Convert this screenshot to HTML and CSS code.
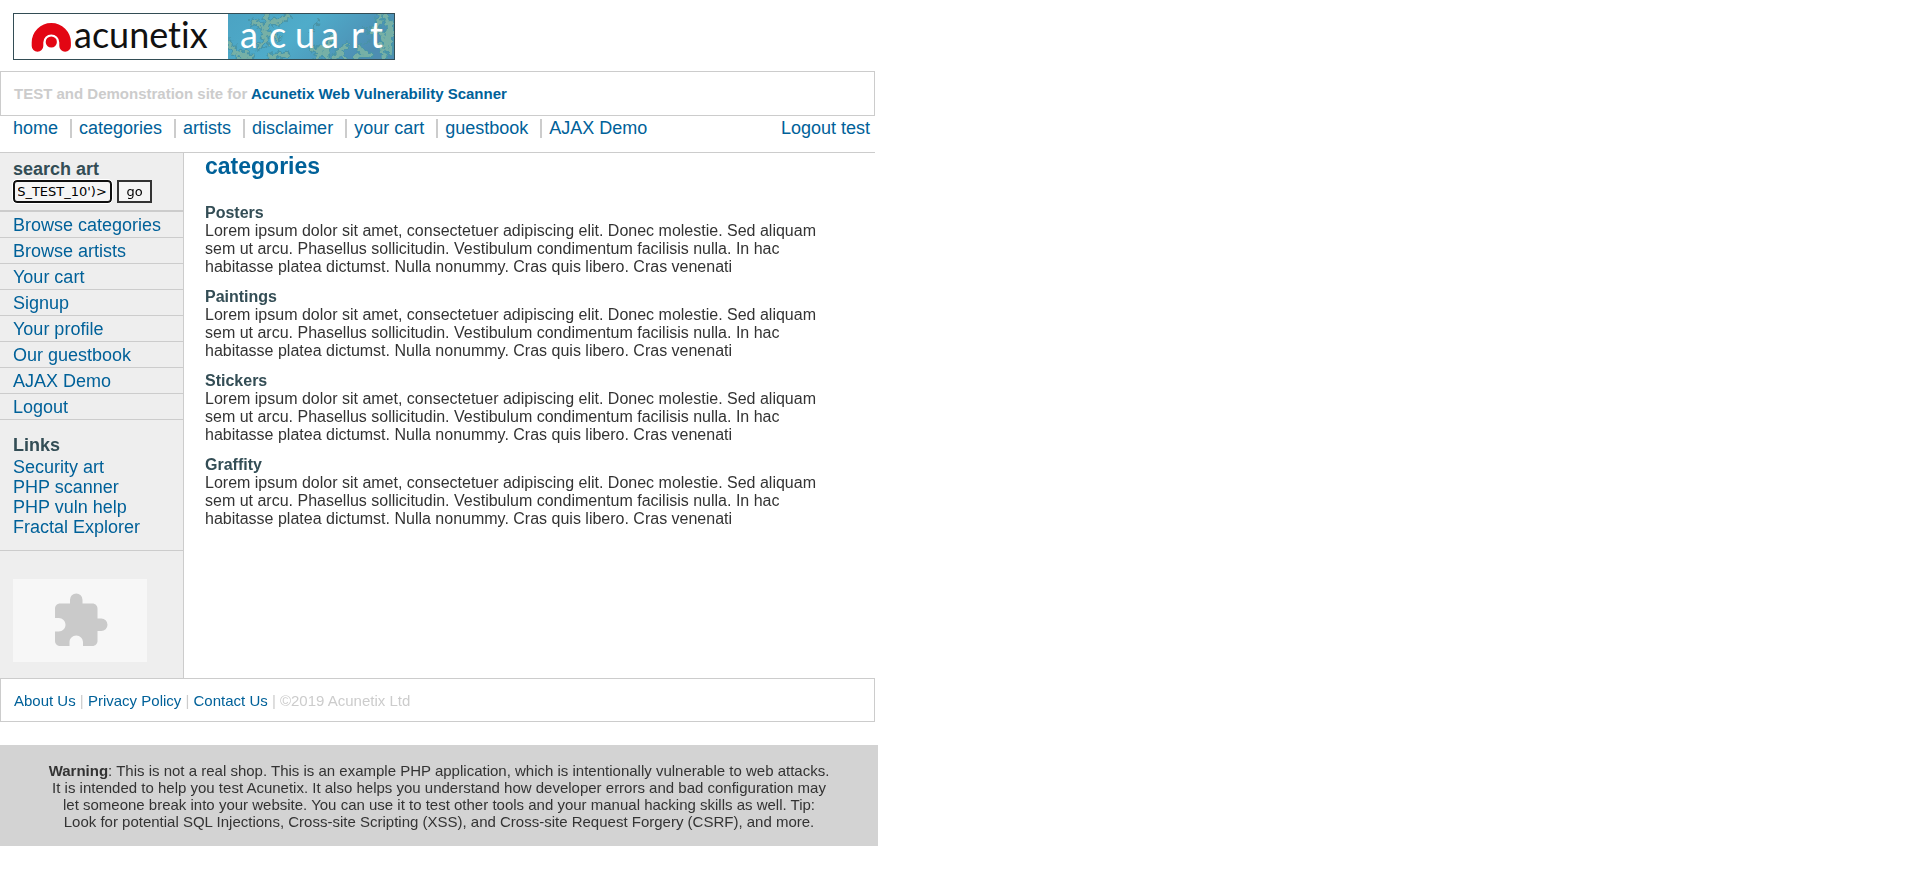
FILE: index.html
```html
<!DOCTYPE html>
<html lang="en">
<head>
<meta charset="utf-8">
<title>picture categories</title>
<link rel="stylesheet" href="styles.css">
</head>
<body>
<div class="page">
  <header class="masthead">
    <a class="logo" href="#" aria-label="Acunetix Acuart">
      <svg width="382" height="47" viewBox="0 0 382 47">
        <defs>
          <linearGradient id="sea" x1="0" y1="0" x2="1" y2="0.3">
            <stop offset="0" stop-color="#4ba3c3"/>
            <stop offset="0.5" stop-color="#4facca"/>
            <stop offset="1" stop-color="#4d8db2"/>
          </linearGradient>
          <filter id="ragged" x="-10%" y="-10%" width="120%" height="120%">
            <feTurbulence type="fractalNoise" baseFrequency="0.22" numOctaves="2" seed="4"/>
            <feDisplacementMap in="SourceGraphic" scale="9" xChannelSelector="R" yChannelSelector="G"/>
            <feGaussianBlur stdDeviation="0.4"/>
          </filter>
          <clipPath id="right"><rect x="215" y="1" width="166" height="45"/></clipPath>
          <path id="fractal" d="M252 0l3 10-4 8 2 10-8 6M254 10l14-2 8-6M253 20l12 5M240 8l10 6M216 30l6 10 10 6M222 38l12 4M228 46l10-3M258 44l16-3M304 46l4-10 8-4 3-8M312 36l2 10M300 36l8 4M322 46l6-10 6-4M326 38l6 8M342 46l8-6 8 2M350 40l-4-6M358 20l8-10 2-10M362 14l8 8 4 14M372 0l4 14-2 16M366 30l6 14M378 10v30"/>
        </defs>
        <rect width="382" height="47" fill="#fff"/>
        <rect x="215" width="167" height="47" fill="url(#sea)"/>
        <g clip-path="url(#right)" fill="none" stroke-linecap="round">
          <g filter="url(#ragged)">
            <use href="#fractal" stroke="#4795a9" stroke-width="7"/>
            <use href="#fractal" stroke="#76b0a6" stroke-width="4"/>
            <path stroke="#4a93a6" stroke-width="2" d="M298 18l5-5 2-6M350 14l8 4M352 30l8-6"/>
          </g>
        </g>
        <path d="M24.500 33V29.500A13.800 13.800 0 0 1 52.100 29.500V33" fill="none" stroke="#e30613" stroke-width="11.600" stroke-linecap="round"/>
        <circle cx="38.300" cy="29" r="5.600" fill="#e30613"/>
        <text class="wordmark" x="61" y="35">acunetix</text>
        <text class="wordmark wordmark-light" x="227 256 282 308 338 357" y="35">acuart</text>
        <rect x="0.500" y="0.500" width="381" height="46" fill="none" stroke="#334d55"/>
      </svg>
    </a>
    <h1 class="tagline">TEST and Demonstration site for <a href="#">Acunetix Web Vulnerability Scanner</a></h1>
    <nav class="topnav">
      <ul class="tabs">
        <li><a href="#">home</a></li>
        <li><a href="#">categories</a></li>
        <li><a href="#">artists</a></li>
        <li><a href="#">disclaimer</a></li>
        <li><a href="#">your cart</a></li>
        <li><a href="#">guestbook</a></li>
        <li><a href="#">AJAX Demo</a></li>
      </ul>
      <a class="logout" href="#">Logout test</a>
    </nav>
  </header>

  <div class="columns">
    <aside class="sidebar">
      <form class="search">
        <label class="side-title" for="q">search art</label>
        <div class="search-row">
          <input class="search-box" id="q" type="text" value="XSS_TEST_10')&gt;" autocomplete="off" spellcheck="false">
          <button class="go" type="button">go</button>
        </div>
      </form>
      <ul class="menu">
        <li><a href="#">Browse categories</a></li>
        <li><a href="#">Browse artists</a></li>
        <li><a href="#">Your cart</a></li>
        <li><a href="#">Signup</a></li>
        <li><a href="#">Your profile</a></li>
        <li><a href="#">Our guestbook</a></li>
        <li><a href="#">AJAX Demo</a></li>
        <li><a href="#">Logout</a></li>
      </ul>
      <div class="links">
        <h3 class="side-title">Links</h3>
        <ul>
          <li><a href="#">Security art</a></li>
          <li><a href="#">PHP scanner</a></li>
          <li><a href="#">PHP vuln help</a></li>
          <li><a href="#">Fractal Explorer</a></li>
        </ul>
      </div>
      <div class="plugin">
        <svg width="60" height="60" viewBox="0 0 24 24" aria-hidden="true">
          <path fill="#cacaca" d="M20.500 11H19V7c0-1.100-.9-2-2-2h-4V3.500a2.500 2.500 0 0 0-5 0V5H4c-1.100 0-1.990.9-1.990 2v3.800H3.500c1.490 0 2.700 1.210 2.700 2.700s-1.210 2.700-2.700 2.700H2V20c0 1.100.9 2 2 2h3.800v-1.500c0-1.490 1.210-2.700 2.700-2.700s2.700 1.210 2.700 2.700V22H17c1.100 0 2-.9 2-2v-4h1.500a2.500 2.500 0 0 0 0-5z"/>
        </svg>
      </div>
    </aside>

    <main class="content">
      <h2>categories</h2>
      <section><h3>Posters</h3><p>Lorem ipsum dolor sit amet, consectetuer adipiscing elit. Donec molestie. Sed aliquam sem ut arcu. Phasellus sollicitudin. Vestibulum condimentum facilisis nulla. In hac habitasse platea dictumst. Nulla nonummy. Cras quis libero. Cras venenati</p></section>
      <section><h3>Paintings</h3><p>Lorem ipsum dolor sit amet, consectetuer adipiscing elit. Donec molestie. Sed aliquam sem ut arcu. Phasellus sollicitudin. Vestibulum condimentum facilisis nulla. In hac habitasse platea dictumst. Nulla nonummy. Cras quis libero. Cras venenati</p></section>
      <section><h3>Stickers</h3><p>Lorem ipsum dolor sit amet, consectetuer adipiscing elit. Donec molestie. Sed aliquam sem ut arcu. Phasellus sollicitudin. Vestibulum condimentum facilisis nulla. In hac habitasse platea dictumst. Nulla nonummy. Cras quis libero. Cras venenati</p></section>
      <section><h3>Graffity</h3><p>Lorem ipsum dolor sit amet, consectetuer adipiscing elit. Donec molestie. Sed aliquam sem ut arcu. Phasellus sollicitudin. Vestibulum condimentum facilisis nulla. In hac habitasse platea dictumst. Nulla nonummy. Cras quis libero. Cras venenati</p></section>
    </main>
  </div>

  <footer class="siteinfo"><a href="#">About Us</a> | <a href="#">Privacy Policy</a> | <a href="#">Contact Us</a> | ©2019 Acunetix Ltd</footer>
</div>
<div class="warning">
  <p><b>Warning</b>: This is not a real shop. This is an example PHP application, which is intentionally vulnerable to web attacks. It is intended to help you test Acunetix. It also helps you understand how developer errors and bad configuration may let someone break into your website. You can use it to test other tools and your manual hacking skills as well. Tip: Look for potential SQL Injections, Cross-site Scripting (XSS), and Cross-site Request Forgery (CSRF), and more.</p>
</div>
<script src="script.js"></script>
</body>
</html>
```
FILE: styles.css
```css
* { box-sizing: border-box; }
body {
  margin: 0;
  background: #fff;
  color: #333;
  font-family: "Liberation Sans", Arial, sans-serif;
  font-size: 16px;
  line-height: 18px;
}
h1, h2, h3, p, ul { margin: 0; padding: 0; }
ul { list-style: none; }
a { color: #006199; text-decoration: none; }
a:hover { text-decoration: underline; }

.page { max-width: 875px; }
.logo { display: block; padding: 13px 13px 11px; }
.logo svg { display: block; }
.wordmark {
  font-family: Lato, sans-serif;
  font-size: 36px;
  font-variant-ligatures: none;
  fill: #111;
}
.wordmark-light { fill: #fff; }

.tagline {
  padding: 13px;
  border: 1px solid #ccc;
  color: #ccc;
  font-size: 15px;
  line-height: 17px;
}
.topnav {
  display: flex;
  justify-content: space-between;
  padding: 3px 5px 14px 13px;
  border-bottom: 1px solid #ccc;
  font-size: 18px;
  line-height: 19px;
}
.tabs { display: flex; flex-wrap: wrap; }
.tabs li + li {
  margin-left: 12px;
  padding-left: 7px;
  border-left: 2px solid #ccc;
}

.columns { display: flex; }
.sidebar {
  flex: none;
  width: 184px;
  background: #eee;
  border-right: 1px solid #ccc;
  font-size: 18px;
  line-height: 20px;
}
.side-title {
  display: block;
  color: #334d55;
  font-size: 18px;
  font-weight: bold;
  line-height: 20px;
}
.search { padding: 6px 13px 7px; border-bottom: 2px solid #ccc; }
.search-row { display: flex; gap: 5px; padding-top: 1px; }
.search-box, .go {
  height: 23px;
  background: #f5f5f5;
  color: #000;
  font-family: Verdana, "DejaVu Sans", sans-serif;
  font-size: 13px;
}
.search-box {
  width: 99px;
  padding: 0 3px;
  border: 2px solid #101010;
  border-radius: 4px;
  outline: 1px solid #fff;
}
.go { width: 35px; padding: 0; border: 2px solid #333; }
.menu li { padding: 3px 13px 2px; border-bottom: 1px solid #ccc; }
.links { padding: 15px 13px 13px; border-bottom: 1px solid #ccc; }
.links .side-title { margin-bottom: 2px; }
.plugin {
  display: flex;
  align-items: center;
  justify-content: center;
  width: 134px;
  height: 83px;
  margin: 28px 13px 16px;
  background: #f7f7f7;
}

.content { flex: 1; padding: 1px 50px 0 21px; }
.content h2 { margin-bottom: 26px; color: #006199; font-size: 23px; line-height: 24px; }
.content section { margin-bottom: 12px; }
.content h3 { color: #334d55; font-size: 16px; line-height: 18px; }

.siteinfo {
  padding: 13px 13px 12px;
  border: 1px solid #ccc;
  color: #ccc;
  font-size: 15px;
  line-height: 17px;
}
.warning {
  max-width: 878px;
  margin-top: 23px;
  padding: 17px 45px 16px;
  background: lightgray;
  font-size: 15px;
  line-height: 17px;
  text-align: center;
}
```
FILE: script.js
```js
const box = document.getElementById("q");
box.focus();
box.setSelectionRange(box.value.length, box.value.length);
box.scrollLeft = box.scrollWidth;
```
